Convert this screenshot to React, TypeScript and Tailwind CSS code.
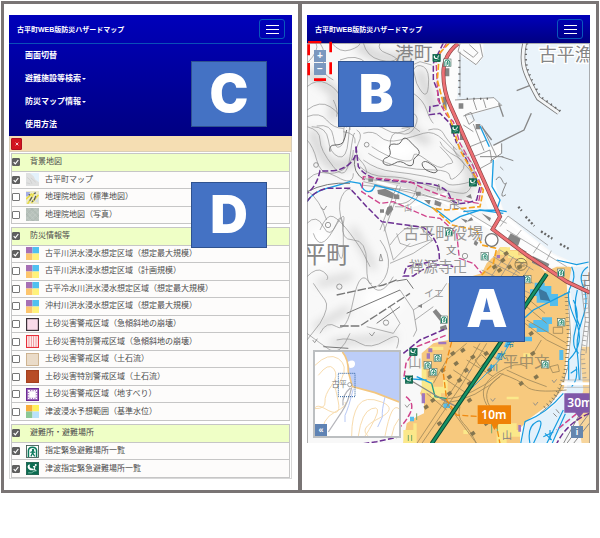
import { useState, type ReactNode } from "react";

const FONT = "font-['Liberation_Sans','Noto_Sans_CJK_JP',sans-serif]";

/* ---------- pictograms, drawn in a 24 x 24 box ---------- */

function ShelterGlyph() {
  return (
    <g>
      <rect x="1" y="1" width="22" height="22" fill="#fff" stroke="#3d5a50" strokeWidth="1.6" />
      <path d="M4.500 22V10Q5 4 12 4T19.500 10V22" fill="none" stroke="#0b7a5c" strokeWidth="2.8" />
      <circle cx="13" cy="9" r="2.2" fill="#0b7a5c" />
      <path d="M12 12l-4 2M12 11l1 5 3 5M12 15l-3 6M13 12l4 2" fill="none" stroke="#0b7a5c" strokeWidth="2.2" />
    </g>
  );
}

function TsunamiGlyph() {
  return (
    <g>
      <rect x="0.5" y="0.5" width="23" height="23" fill="#0b6b50" stroke="#074b38" />
      <path d="M3 8Q4 3 8 5q-2 1-1 4t5 3l4 3H8Q3 14 3 8z" fill="#fff" />
      <circle cx="18" cy="5.500" r="1.800" fill="#fff" />
      <path d="M17 8l-4 1M17 8l-2 5 3 3" fill="none" stroke="#fff" strokeWidth="2" />
      <path d="M4 20h6l5-3 5-1" fill="none" stroke="#8cc5b2" strokeWidth="1.6" />
    </g>
  );
}

function Quad({ c }: { c: [string, string, string, string] }) {
  return (
    <g>
      <rect width="12" height="12" fill={c[0]} />
      <rect x="12" width="12" height="12" fill={c[1]} />
      <rect y="12" width="12" height="12" fill={c[2]} />
      <rect x="12" y="12" width="12" height="12" fill={c[3]} />
    </g>
  );
}

const flood = <Quad c={["#a66fb5", "#4fc0f0", "#fdc56c", "#fff27a"]} />;

const thumbs: Record<string, ReactNode> = {
  town: (
    <g>
      <rect width="24" height="24" fill="#dfe0e0" />
      <path d="M7 0H24V17L17 12 14 6z" fill="#e3f1fb" />
      <path d="M2 8l6 5 3 7M9 9l9 8M1 18l7 2" fill="none" stroke="#cccccc" strokeWidth="1.5" />
    </g>
  ),
  standard: (
    <g>
      <rect width="24" height="24" fill="#eceacb" />
      <path d="M0 2h8l-5 8H0z" fill="#a4aee6" />
      <path d="M3 24L15 4M0 15L11 5M10 22L23 7" stroke="#e8dc48" strokeWidth="3" />
      <path d="M7 18l4-7M15 5l3-2M15 17l3-8M5 8l2-2M11 20l2-2" fill="none" stroke="#565c66" strokeWidth="2.4" />
      <path d="M17 19l6-6v9z" fill="#d5dfea" />
    </g>
  ),
  photo: (
    <g>
      <rect width="24" height="24" fill="#b6c0ba" />
      <path d="M0 6l18 18M4 0l20 20M0 16l8 8M0 21L21 0M6 24L24 6M14 0l10 10" stroke="#c3cbc6" strokeWidth="1.4" />
      <path d="M0 11l13 13M9 0l15 15M0 13L13 0M13 24l11-11" stroke="#aab4ae" />
    </g>
  ),
  flood,
  slope: <rect x="1" y="1" width="22" height="22" fill="#f9dbe9" stroke="#3a3037" strokeWidth="2.4" />,
  slopeSpecial: (
    <g>
      <rect x="1" y="1" width="22" height="22" fill="#fff0f0" stroke="#e8303a" strokeWidth="2" />
      <path d="M5.500 2v20M10 2v20M14 2v20M18.500 2v20" stroke="#ec8c92" strokeWidth="1.6" />
    </g>
  ),
  debris: <rect x="1" y="1" width="22" height="22" fill="#eadbc8" stroke="#c8aa84" strokeWidth="1.6" />,
  debrisSpecial: <rect x="1" y="1" width="22" height="22" fill="#b84c26" stroke="#a4401f" strokeWidth="2" />,
  landslide: (
    <g>
      <rect x="1" y="1" width="22" height="22" fill="#a06cbc" stroke="#6d2a94" strokeWidth="2" />
      <rect x="6" y="6" width="12" height="12" fill="#fff" />
      <rect x="5" y="5" width="14" height="14" fill="none" stroke="#fff" strokeWidth="3" strokeDasharray="2.500 2" />
    </g>
  ),
  tsunamiArea: <Quad c={["#f9ad3c", "#fff25c", "#8cc795", "#b9e2fa"]} />,
  shelter: <ShelterGlyph />,
  tsunami: <TsunamiGlyph />,
};

/* ---------- shared controls ---------- */

function TitleBar() {
  return (
    <div className="flex h-7 items-center justify-between pr-[7px] pl-2">
      <h1 className="text-[7px] leading-none font-bold whitespace-nowrap text-white">古平町WEB版防災ハザードマップ</h1>
      <button
        type="button"
        aria-label="メニュー"
        className="flex h-5 w-[26px] flex-col items-center justify-center gap-[3px] rounded-[3px] border border-[#0a58bc]"
      >
        <span className="h-px w-[13px] bg-white" />
        <span className="h-px w-[13px] bg-white" />
        <span className="h-px w-[13px] bg-white" />
      </button>
    </div>
  );
}

function Callout({ letter, className }: { letter: string; className: string }) {
  return (
    <div
      className={`absolute flex h-[66px] w-[76px] items-center justify-center border border-[#2f528f] bg-[#4472c4] font-['Inter','Open_Sans',sans-serif] text-[52px] leading-none font-black text-white ${className}`}
    >
      {letter}
    </div>
  );
}

function Check({ label, initial, children }: { label: string; initial: boolean; children?: ReactNode }) {
  const [on, setOn] = useState(initial);
  return (
    <label className="flex h-full items-center whitespace-nowrap">
      <span className="grid size-2 shrink-0">
        <input
          type="checkbox"
          checked={on}
          onChange={() => setOn(!on)}
          className="col-start-1 row-start-1 size-2 appearance-none rounded-[1px] border border-[#767676] bg-white checked:border-[#5f5f5f] checked:bg-[#5f5f5f]"
        />
        {on && (
          <svg viewBox="0 0 8 8" className="pointer-events-none col-start-1 row-start-1 size-2">
            <path d="M1.700 4.200l1.600 1.600 3-3.800" fill="none" stroke="#fff" strokeWidth="1.200" />
          </svg>
        )}
      </span>
      {children}
      <span>{label}</span>
    </label>
  );
}

type Layer = { icon: string; name: string; on?: boolean };

const groups: { title: string; height: string; layers: Layer[] }[] = [
  {
    title: "背景地図",
    height: "h-[71px]",
    layers: [
      { icon: "town", name: "古平町マップ", on: true },
      { icon: "standard", name: "地理院地図（標準地図）" },
      { icon: "photo", name: "地理院地図（写真）" },
    ],
  },
  {
    title: "防災情報等",
    height: "h-[194px]",
    layers: [
      { icon: "flood", name: "古平川洪水浸水想定区域（想定最大規模）", on: true },
      { icon: "flood", name: "古平川洪水浸水想定区域（計画規模）" },
      { icon: "flood", name: "古平冷水川洪水浸水想定区域（想定最大規模）" },
      { icon: "flood", name: "沖村川洪水浸水想定区域（想定最大規模）" },
      { icon: "slope", name: "土砂災害警戒区域（急傾斜地の崩壊）" },
      { icon: "slopeSpecial", name: "土砂災害特別警戒区域（急傾斜地の崩壊）" },
      { icon: "debris", name: "土砂災害警戒区域（土石流）" },
      { icon: "debrisSpecial", name: "土砂災害特別警戒区域（土石流）" },
      { icon: "landslide", name: "土砂災害警戒区域（地すべり）" },
      { icon: "tsunamiArea", name: "津波浸水予想範囲（基準水位）" },
    ],
  },
  {
    title: "避難所・避難場所",
    height: "h-[54px]",
    layers: [
      { icon: "shelter", name: "指定緊急避難場所一覧", on: true },
      { icon: "tsunami", name: "津波指定緊急避難場所一覧", on: true },
    ],
  },
];

const menu = [
  { name: "画面切替" },
  { name: "避難施設等検索", more: true },
  { name: "防災マップ情報", more: true },
  { name: "使用方法" },
];

function LayerPanel() {
  return (
    <section className="relative min-w-0 flex-1 pt-[11px] pr-[6px] pb-[11px] pl-[5px]">
      <header className="bg-linear-to-b from-[#0000ba] to-[#000082]">
        <TitleBar />
        <nav className="border-t border-[#0a4fb8]">
          {menu.map((m) => (
            <button
              key={m.name}
              type="button"
              className="flex h-[23px] w-full items-center gap-px pl-4 text-[8px] leading-none font-bold text-white"
            >
              {m.name}
              {m.more && <span className="mt-px border-x-2 border-t-2 border-x-transparent border-t-white" />}
            </button>
          ))}
        </nav>
      </header>
      <div className="flex h-4 items-center border border-t-0 border-[#d9cdb8] bg-[#f5deb3] pl-px">
        <button
          type="button"
          aria-label="閉じる"
          className="flex h-3 w-[11px] items-center justify-center rounded-[1px] border border-[#b01020] bg-[#d2141e]"
        >
          <svg viewBox="0 0 6 6" className="size-1">
            <path d="M1 1l4 4M5 1l-4 4" stroke="#fff" strokeWidth="1.200" />
          </svg>
        </button>
      </div>
      <div className="flex flex-col gap-[3px] border-x border-b border-[#d8d8d8] bg-white px-px pt-px text-[8px] leading-none text-[#4b4b4b]">
        {groups.map((g) => (
          <ul key={g.title} className={`flex flex-col border border-[#c6c6c6] ${g.height}`}>
            <li className="min-h-0 flex-1 bg-[#efffc6]">
              <Check label={g.title} initial>
                <span className="w-[10px]" />
              </Check>
            </li>
            {g.layers.map((l) => (
              <li key={l.name} className="min-h-0 flex-1 border-t border-[#c6c6c6] bg-[#fdfcfb]">
                <Check label={l.name} initial={!!l.on}>
                  <svg viewBox="0 0 24 24" className="mr-[6px] ml-[6px] size-[13px] shrink-0">
                    {thumbs[l.icon]}
                  </svg>
                </Check>
              </li>
            ))}
          </ul>
        ))}
      </div>
      <Callout letter="C" className="top-[57px] right-[31px]" />
      <Callout letter="D" className="top-[178px] right-[31px]" />
    </section>
  );
}

/* ---------- map drawing ---------- */

const contours = [
  "M21 190Q60 150 48 129M60 129Q80 160 70 190T100 240M95 129Q120 160 150 150T180 129M190 129Q200 170 240 180T290 175",
  "M240 129Q230 150 260 160T300 190T360 185L395 195M120 180Q170 160 200 190M21 260Q50 235 80 250T120 290",
  "M21 330Q60 300 90 320T116 350M21 350Q60 335 80 360T130 385M340 210Q350 190 370 200T385 260T350 250z",
  "M340 280Q370 300 380 330T400 370M340 340Q360 350 345 380T300 400T270 440M385 390Q420 380 430 400T470 450",
  "M21 380Q60 390 60 420T100 500T150 470T165 400M35 380Q80 380 85 420T115 470T145 420T150 390M50 378Q95 370 100 410T120 440T132 400T140 382",
  "M21 420Q40 440 50 480T90 520T140 500T160 450M170 390Q190 400 175 430T180 480T200 520",
  "M190 400Q220 390 240 410T300 420T370 400T430 420T480 470M195 380Q230 370 260 390T330 385",
  "M180 500Q210 530 260 530T350 545T430 570T490 580T520 540T510 480T470 430",
  "M190 480Q230 510 280 515T380 530T440 550T495 550T500 500T460 440",
  "M205 460Q250 490 300 500T400 510T450 530T480 520T470 470T420 425",
  "M215 440Q260 470 300 480T340 470T380 480T430 500T455 490T420 440",
  "M21 540Q60 500 110 530T160 520M21 670Q50 640 70 680T110 670T130 720T110 740",
  "M60 690Q80 640 100 650T150 700T190 760T210 800M40 700Q60 760 100 690T130 670T160 720T200 790T215 850",
  "M21 570Q60 600 80 660M130 680Q110 620 125 590T155 570M240 720Q270 760 265 800T230 860",
  "M21 830Q50 800 70 815T80 840M40 850Q60 880 75 900T60 970L21 1020M60 1000Q80 960 110 980T160 900T210 850T280 830",
  "M21 1000Q60 1030 90 1050T150 1000M110 1020Q150 1010 180 1030T260 1020T290 1045M200 980L280 1000 300 970 270 920",
  "M270 735Q330 650 370 690T390 720L330 740 300 730 290 700M250 670L280 780 330 730M270 790L340 760 400 720",
  "M130 395Q170 400 165 430M305 385L340 380 360 395M100 300Q115 330 110 350",
];

const darkContours = [
  "M250 490Q246 476 262 472Q274 466 270 452Q262 432 282 432Q298 436 304 424Q310 408 324 418Q340 436 354 448Q364 462 348 470Q338 478 340 490Q336 502 320 494Q300 478 284 490Q264 502 250 490z",
  "M366 490Q374 478 392 492Q408 500 412 512Q408 522 392 516Q366 508 366 490z",
  "M90 455Q85 435 105 435T130 425T140 390M196 250Q176 254 186 266",
];

const shelters = [
  [430, 176], [435, 685], [542, 757], [771, 806], [670, 826], [420, 947], [772, 955], [724, 1081], [401, 1062], [371, 1084], [388, 1104],
];
const tsunamiSites = [
  [398, 162], [454, 376], [507, 535], [328, 1044], [315, 1127],
];

const buildings = [
  "M232 570l24-4 26 14-4 16-44-14zM282 582l16 2v14l-18-2zM262 622l12-6 6 12-16 20-8-8zM240 628h12v10h-12zM348 575h14v12h-14zM372 600h20l-4 14zM405 600l20 8-4 12-18-6z",
  "M432 205h16v24h-16zM428 290h12v36h-12zM476 310h14v16h-14zM527 372h14v16h-14zM480 400h12v20h-12zM205 535h14v10h-14zM498 590l14-8 4 14zM482 655l20 6-4 8z",
  "M632 700l30 16-8 22-32-20zM698 768l50 24-8 18-44-22zM660 745l20 10-6 10zM500 665l14-14 6 10zM545 640l28 14-4 10zM525 720l10 8-6 10-8-6z",
  "M398 935l10-8 20 24-6 14zM420 980l18-6 4 14-20 6zM352 918l14-6v12z",
];

const fieldHouses: [number, number][] = [
  [480, 1050], [510, 1070], [460, 1090], [490, 1110], [550, 1060], [470, 1140], [440, 1130], [420, 1110], [450, 1060],
  [500, 1150], [500, 1200], [370, 1220], [410, 1270], [440, 1180], [510, 1300], [550, 1270],
  [600, 780], [620, 800], [590, 810], [655, 1150], [700, 1130], [685, 1000], [560, 1110],
  [690, 1060], [610, 760], [575, 800], [650, 800], [390, 1200],
];

function MapDrawing() {
  return (
    <svg viewBox="21 129 849 1201" className="block w-full" fontFamily="'Noto Sans CJK JP', sans-serif">
      <defs>
        <filter id="soft" x="-20%" y="-20%" width="140%" height="140%">
          <feGaussianBlur stdDeviation="14" />
        </filter>
      </defs>
      <rect x="21" y="129" width="849" height="1202" fill="#f8f8f8" />

      {/* hill shading */}
      <g filter="url(#soft)" fill="none" stroke="#d0d0d0" strokeLinecap="round">
        <path d="M30 220L110 280 100 350M180 140Q250 190 330 170M360 220L400 330M40 400Q80 540 160 480" strokeWidth="26" />
        <path d="M200 520Q330 560 480 590L520 540 480 450M340 300Q300 400 380 420" strokeWidth="24" />
        <path d="M160 690L220 800M60 850L150 830M50 980L140 930M100 1030L280 1010" strokeWidth="18" />
      </g>
      <g filter="url(#soft)" fill="#fff">
        <ellipse cx="290" cy="450" rx="60" ry="30" />
        <ellipse cx="60" cy="740" rx="40" ry="60" />
        <ellipse cx="250" cy="900" rx="60" ry="40" />
      </g>

      {/* sea */}
      <path
        d="M478 129L472 300 580 293 606 318 500 345 540 376 566 440 580 500 583 560 612 632 670 690 760 760 830 792 870 796V129z"
        fill="#eaf3fa"
      />
      <path d="M440 129H550V172L530 196 478 165 470 300 580 293 604 316 498 350 540 376 570 440 600 425 605 460 570 500 588 560 610 640 760 765 830 795 740 800 590 700 500 440 430 290z" fill="#fcfcfc" />

      <g fill="none" stroke="#8c8c8c" strokeWidth="2">
        {contours.map((d) => (
          <path key={d} d={d} />
        ))}
      </g>
      <g fill="none" stroke="#666" strokeWidth="3">
        {darkContours.map((d) => (
          <path key={d} d={d} />
        ))}
      </g>

      {/* harbour */}
      <g fill="none" stroke="#888" strokeWidth="2.500">
        <path d="M480 131L474 155 528 194 548 170 540 131M490 150l30 22 14-14-26-24M480 155V290M465 300L582 293 605 316 490 348M520 300l10 30M550 298l8 26" />
        <path d="M495 345l18-8 10 24-16 12zM490 375l30 20M545 376L590 470M520 372l32 80" />
        <path d="M600 500l10 10M520 470l50-20 6 36-40 22zM510 440l50-20" />
        <path d="M596 310l14 40M650 272l46-18M580 436L672 390 694 340M575 420l-30-40" strokeWidth="4" />
      </g>
      <path d="M674 129Q665 170 672 200T715 295L776 338" fill="none" stroke="#777" strokeWidth="14" />
      <path d="M674 129Q665 170 672 200T715 295L776 338" fill="none" stroke="#f4f6f7" strokeWidth="9" />
      <path d="M682 129Q674 170 681 200T722 290L782 334" fill="none" stroke="#666" strokeWidth="6" strokeDasharray="4 12" />
      <path d="M478 180V290M500 296H580" stroke="#666" strokeWidth="6" strokeDasharray="4 16" />
      <path d="M655 620l10 12M677 650l26 28M723 694l34 22M780 732l26 14" fill="none" stroke="#666" strokeWidth="7" strokeDasharray="6 6" />
      <path d="M604 470L640 482M605 430V460L570 484M540 470l70 0M588 540q10-18 18 0t12 10-8 20 8 14" fill="none" stroke="#888" strokeWidth="3" />

      {/* inundation area */}
      <path
        d="M600 742L620 742V750H650L700 780 735 815 770 800H820V850H800L808 990 798 1080 792 1165 745 1215 690 1255 660 1285V1331H310L320 1270 350 1250 372 1240V1200L360 1180 375 1150 365 1100V1060L400 1030 445 1020V850L545 820 560 790 580 770z"
        fill="#f7c97e"
      />
      <path d="M840 1040H870V1331H845L830 1230z" fill="#f7d59c" />
      <g fill="#fbe88a">
        <path d="M600 742h30v10h24v14h24v20h-24v-12h-30v-10h-24zM365 1100h14v40h20v20h30v-20h14v40h-20v20h-30v-20h-28zM310 1290h30v-20h10v60H310zM670 1060h20v14h-20zM620 1190h36v8h-36zM590 1270h60v20h10v20h-40v20h-30zM390 1040h40v10h-40zM490 1290h14v12h-14z" />
      </g>
      <g fill="#55bdec">
        <path d="M704 848h30v10h20v24h20v36h-24v-10h-40v-20h-20v-20h14zM700 960h26v-8h30v20h-10v24h-36v-12h-24v-14h14zM670 1010h26v14h-26zM778 1050h12v30h-12zM430 1210h20v14h-20zM330 1250h12v14h-12z" />
        <path d="M636 1020l-14 24-10-4 8-20zM606 1060l-12 22-8-6 8-16zM582 1096l-10 16-10-4 10-14z" />
      </g>
      <path d="M715 865l24 12 12 26-30-4z" fill="#3b78a0" />
      <g fill="#a077bd">
        <path d="M385 1045h12v12h-12zM415 1025h24v8h-24zM365 1180h10v30h-10zM590 765h10v10h-10zM655 1275h8v20h-8zM380 1060h10v16h-10z" />
      </g>
      <path d="M325 1305v18M335 1305v18M350 1240v20M575 1270v30M592 1275v20" stroke="#74a86a" strokeWidth="3" />

      {/* street grid */}
      <g fill="none" stroke="#fff" strokeWidth="9">
        <path d="M245 650L300 560M230 545L420 600 600 700M270 600l60 20 110-40" />
        <path d="M610 650L740 760 820 800" />
      </g>
      <g fill="none" stroke="#8a8a8a" strokeWidth="2">
        <path d="M240 690L292 555M252 694L302 560M180 555L330 570 420 600M190 545L450 605 590 690M185 535L300 550M280 610q60 10 70-50M285 620q50 10 76-44" />
        <path d="M600 680l24-32 120 88M620 690L800 800M640 720l24-30M700 760l20-30M740 780l14-28M600 660l20 10M340 930L420 880 440 850M345 960L400 920M340 930l10 60-10 20M300 870L340 930" />
        <path d="M560 780L700 850M545 810L690 880M580 770L660 820M620 760L560 850M640 770L590 850M670 785L620 850M690 800L650 860M600 750l100 60" />
      </g>
      <g fill="none" stroke="#a0895c" strokeWidth="2.500">
        <path d="M350 1331L470 1150 540 1030M365 1331L485 1155 560 1030M425 1200Q520 1190 600 1120M430 1210Q530 1200 610 1120M440 1210L530 1331M480 1220q-10 30 10 50t40 61" />
        <path d="M560 1215Q530 1160 590 1120T680 1100M570 1220Q540 1170 600 1130M600 1120q60 20 80 40t120 10M620 1110q60 30 120 50M675 970L740 1020 800 1050M680 960L800 1030" />
        <path d="M400 1150L440 1080 500 1030M520 1040L600 1080M500 1080l80 50M460 1110l60 40M440 1140l60 40M380 1180L440 1230M700 1060L724 1020M680 920l60 50M735 940l-70-60" />
        <path d="M525 1080l20-16 16 16-20 20zM760 982h28v18h-28zM385 1115h20v16h-20zM750 1100l24-6 4 20-20 4z" />
      </g>
      <path d="M798 880L806 1010 798 1100Q780 1190 730 1225" fill="none" stroke="#665" strokeWidth="10" strokeDasharray="2 10" />
      <path d="M804 880L812 1010 804 1100Q780 1200 720 1240" fill="none" stroke="#776" strokeWidth="2" />
      <g fill="#857650">
        {fieldHouses.map(([x, y]) => (
          <rect key={`${x}-${y}`} x={x} y={y} width="13" height="11" transform={`rotate(-35 ${x} ${y})`} />
        ))}
      </g>
      <g fill="#858585">
        {buildings.map((d) => (
          <path key={d} d={d} />
        ))}
      </g>

      {/* main river */}
      <path d="M815 800L864 800 850 960 842 1080 850 1170 830 1250 740 1331H662L680 1262 745 1232 800 1180 806 1080 822 960 808 840z" fill="#e3f1fb" />
      <g fill="none" stroke="#159be0" strokeWidth="3.500">
        <path d="M815 800Q830 830 812 860T826 960T806 1080V1140M864 800Q832 820 850 860T846 960T834 1080L838 1140" />
        <path d="M820 900q20 40 6 90t10 70M832 870q-16 60 8 110M662 1331L675 1265Q740 1240 790 1180M690 1331Q680 1280 710 1265T700 1331M740 1331L790 1230M756 1331l40-90M770 780l60 14 36-8" />
        <path d="M730 1310l30-14M735 1300l20 20M750 1290v30" />
        <path d="M815 1160q20-20 14-60M812 1120l20-14" />
      </g>
      <path d="M850 840L862 960 848 1060 854 1140" fill="none" stroke="#8d8d8d" strokeWidth="12" strokeDasharray="2 12" />
      <path d="M844 860L856 960 842 1060V1140M862 860l6 100-10 100" fill="none" stroke="#888" strokeWidth="2" />
      <path d="M780 1140H870M786 1162H870" stroke="#aaa" strokeWidth="2" />
      <path d="M784 1151H870" stroke="#fff" strokeWidth="8" />
      <path d="M800 1331L868 1240M820 1331L868 1270M790 1331l50-90M760 1240l10 10M768 1228l10 12" fill="none" stroke="#888" strokeWidth="3" />

      {/* streams */}
      <g fill="none" stroke="#199ee3" strokeWidth="4">
        <path d="M21 605Q40 575 80 565T150 545L180 550Q190 575 205 575T225 555L280 570 350 600 410 630 455 665 480 650 540 630 610 640" />
        <path d="M490 635L520 632 590 630 600 600 576 560 580 480M540 378L568 440M590 630L620 635" />
        <path d="M640 985L700 930 810 875M350 1130L395 1150M310 1135L380 1140" />
        <path d="M640 1010q-30 60-60 90t-80 80" strokeWidth="2.500" />
      </g>
      <path d="M395 1150l10 40 35 6" fill="none" stroke="#249b83" strokeWidth="4" />

      {/* dark tracks */}
      <g fill="none" stroke="#777" strokeWidth="4">
        <path d="M21 575Q80 545 150 550M165 470q-10 50 30 70M290 843l30-5 20 28M300 870L140 940M230 970L300 920M145 1045L70 1040" strokeWidth="3" />
        <path d="M110 885L250 855 290 840" strokeDasharray="26 6" />
        <path d="M120 978H180L330 880" strokeDasharray="26 6" />
        <path d="M330 1140L430 1200 470 1220" stroke="#888" />
      </g>

      {/* hazard outlines */}
      <g fill="none" strokeWidth="4.500" strokeDasharray="18 7">
        <path d="M168 440L175 500Q200 535 250 540T370 550T450 590T530 600L540 560 510 500 490 460" stroke="#6b2f92" />
        <path d="M168 440Q172 470 150 490T100 512T60 512Q50 560 21 580M21 605Q40 575 80 565H150L200 620 245 665 370 682Q420 720 418 780L320 800 310 828H340Q400 780 460 800" stroke="#6b2f92" />
        <path d="M430 129L400 190V240L412 270 420 315 390 320 388 344 420 340 450 370 470 430" stroke="#6b2f92" />
        <path d="M310 1060L360 1020 440 985M190 1331L230 1325 300 1310M868 1240Q800 1270 770 1331" stroke="#6b2f92" />
        <path d="M440 129L408 180 414 300 440 345 460 365 480 430 520 500 545 560 535 610 450 595 380 570 330 545 190 530 185 575 240 610 280 605 380 650 420 655 470 700 478 775 520 790 545 820" stroke="#d0458c" strokeWidth="4" />
        <path d="M312 1130L318 1090 350 1040 440 1005M318 1190Q345 1210 330 1240T300 1280M868 1210L770 1290" stroke="#d0458c" />
        <path d="M448 129L418 160 412 240 430 310 455 370 480 450 520 520 550 570 540 620 440 630 400 625 455 675 530 690 545 735 590 745 580 790 545 825" stroke="#f5a31e" strokeWidth="5" />
        <path d="M455 1025L430 1120 440 1200 470 1245 540 1250 590 1280 600 1331" stroke="#f08a12" strokeWidth="4" />
      </g>

      {/* trunk roads */}
      <path d="M474 131Q430 165 430 220T452 320L510 450 600 650 578 688 680 765 745 808 800 845 870 878" fill="none" stroke="#8a4444" strokeWidth="12" />
      <path d="M474 131Q430 165 430 220T452 320L510 450 600 650 578 688 680 765 745 808 800 845 870 878" fill="none" stroke="#ed6f74" strokeWidth="8" />
      <path d="M740 822L600 1030 395 1331" fill="none" stroke="#0a4b33" strokeWidth="13" />
      <path d="M740 822L600 1030 395 1331" fill="none" stroke="#159267" strokeWidth="7" />
      <circle cx="575" cy="720" r="19" fill="#fff" stroke="#777" strokeWidth="4" />
      <g fill="none" stroke="#8b7b52" strokeWidth="3">
        <circle cx="663" cy="793" r="18" />
        <path d="M648 788h30M652 798h22M663 788v18" />
      </g>

      {/* map symbols */}
      <g fill="none" stroke="#888" strokeWidth="2.500">
        <circle cx="200" cy="434" r="7" />
        <circle cx="48" cy="495" r="7" />
        <circle cx="84" cy="675" r="8" />
        <circle cx="118" cy="860" r="8" />
        <circle cx="258" cy="968" r="8" />
        <circle cx="495" cy="768" r="8" />
        <path d="M62 622l10 8 8-12M208 1000l8 8 8-12M315 1214l6 8 8-10M38 1020l6 8 8-12M500 1110l6 8 8-10M572 1196l6 8 8-10M700 1208l6 8 8-10M756 1140l6 8 8-10M412 572l4-20 4 20M238 782l4-20 6 20z" />
      </g>

      {/* place names */}
      <g fill="#858585">
        <text x="285" y="180" fontSize="56">港町</text>
        <text x="716" y="184" fontSize="54" stroke="#fff" strokeWidth="8" paintOrder="stroke">古平漁</text>
        <text x="9" y="788" fontSize="70">平町</text>
        <text x="310" y="716" fontSize="48" fill="#999">古平町役場</text>
        <text x="326" y="815" fontSize="44" fill="#999">禅源寺卍</text>
        <text x="446" y="628" fontSize="34">卍</text>
        <text x="438" y="762" fontSize="32">文</text>
        <text x="610" y="1100" fontSize="46" fill="#a2906a">平中文</text>
        <text x="325" y="1100" fontSize="40" fill="#999">山</text>
        <text x="845" y="855" fontSize="44">古</text>
        <text x="606" y="1316" fontSize="30">山</text>
        <text x="372" y="892" fontSize="30" fill="#999">イエ</text>
        <text x="312" y="634" fontSize="24" fill="#999">山</text>
      </g>
      <g fill="#147ea8" fontSize="26">
        <text x="616" y="1040">冷</text>
        <text x="592" y="1076">水</text>
        <text x="568" y="1112">川</text>
      </g>

      {shelters.map(([x, y]) => (
        <g key={`s${x}`} transform={`translate(${x} ${y})`}>
          <ShelterGlyph />
        </g>
      ))}
      {tsunamiSites.map(([x, y]) => (
        <g key={`t${x}`} transform={`translate(${x} ${y})`}>
          <TsunamiGlyph />
        </g>
      ))}

      {/* depth flags */}
      <g fontFamily="'Noto Sans', sans-serif" fontWeight="600" fontSize="36" fill="#fff">
        <path d="M533 1216H633V1272H596L583 1290 574 1272H533z" fill="#ef8208" />
        <text x="544" y="1257">10m</text>
        <path d="M793 1180H870V1238H850L838 1254 826 1238H793z" fill="#8058a8" />
        <text x="802" y="1221">30m</text>
      </g>
      <rect x="22" y="130" width="847" height="1200" fill="none" stroke="#8a8a8a" strokeWidth="2" />
    </svg>
  );
}

function Overview() {
  return (
    <div className="absolute bottom-[5px] left-[6px] size-[88px] border-2 border-[#bcbfc1] bg-white">
      <svg viewBox="0 0 252 252" className="block size-full" fontFamily="'Noto Sans CJK JP', sans-serif">
        <path d="M82 0Q100 20 100 60L112 104 180 122 252 150V0z" fill="#bccdf8" />
        <path d="M98 30q20-10 22 4t-16 14z" fill="#fff" />
        <g fill="none" stroke="#f8dcae" strokeWidth="3">
          <path d="M0 40Q40 0 70 20T80 80 60 110 70 150 30 170 0 230M10 70Q40 30 56 50T50 100 30 150 0 170M20 252Q20 200 60 180T90 150" />
          <path d="M110 252Q110 190 130 160T200 150 190 200 160 252M130 252Q140 180 170 170T180 200 150 252M210 252Q220 200 230 180T252 170M230 252Q235 220 252 200" />
        </g>
        <path d="M82 0Q100 20 100 60L112 104 180 122 252 150" fill="none" stroke="#f3c67f" strokeWidth="5" />
        <path d="M110 106Q100 150 80 180T40 240M106 108Q80 130 84 160" fill="none" stroke="#b5b5bb" strokeWidth="4" />
        <path d="M115 110Q100 170 90 190V210M210 135q-10 40-8 60l-14 30" fill="none" stroke="#b7c8f6" strokeWidth="3" />
        <text x="50" y="106" fontSize="23" fill="#777">古平</text>
        <circle cx="104" cy="98" r="6" fill="#fff" stroke="#777" strokeWidth="2" />
        <rect x="70" y="64" width="50" height="70" fill="none" stroke="#2a5f9e" strokeWidth="3" strokeDasharray="3 3" />
      </svg>
      <button
        type="button"
        aria-label="概観図を閉じる"
        className="absolute bottom-0 left-0 flex size-3 items-center justify-center bg-[#5f83b4] text-[9px] leading-none font-bold text-white"
      >
        «
      </button>
    </div>
  );
}

function MapPanel() {
  return (
    <section className="min-w-0 flex-1 border-l-4 border-[#797474] pt-[11px] pr-[6px] pl-[5px]">
      <header className="bg-linear-to-b from-[#0000ba] to-[#000082]">
        <TitleBar />
      </header>
      <div className="relative">
        <MapDrawing />
        <div className="absolute top-[7px] left-[7px] flex flex-col gap-px text-[10px] leading-none font-bold text-white">
          <button type="button" aria-label="拡大" className="flex size-3 items-center justify-center bg-[#7b98bf]">
            +
          </button>
          <button type="button" aria-label="縮小" className="flex size-3 items-center justify-center bg-[#7b98bf]">
            −
          </button>
        </div>
        <svg viewBox="0 0 75 120" className="pointer-events-none absolute -top-[2px] left-0 h-10 w-[25px]">
          <path
            d="M3 3H43M71 2V34M71 64V100M57 116H21M5 10V43M5 66V103"
            fill="none"
            stroke="#f00"
            strokeWidth="8"
          />
        </svg>
        <Callout letter="B" className="top-[18px] left-[31px]" />
        <Callout letter="A" className="top-[233px] left-[142px]" />
        <Overview />
        <button
          type="button"
          aria-label="情報"
          className="absolute right-[7px] bottom-[5px] flex size-3 items-center justify-center bg-[#6586ae] text-[9px] leading-none font-bold text-white"
        >
          i
        </button>
      </div>
    </section>
  );
}

export default function App() {
  return (
    <div className={`min-h-screen bg-white p-px ${FONT}`}>
      <main className="flex border-[3px] border-[#797474]">
        <LayerPanel />
        <MapPanel />
      </main>
    </div>
  );
}
